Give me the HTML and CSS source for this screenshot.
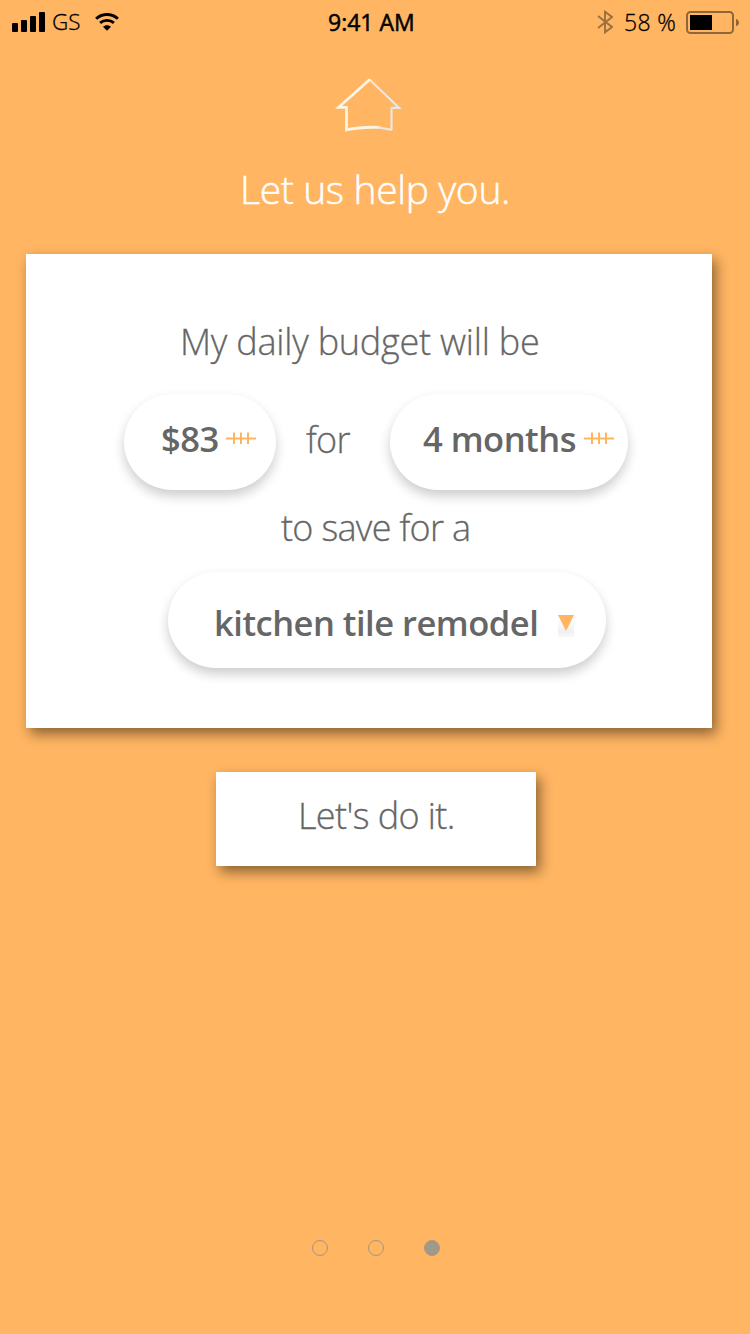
FILE: index.html
```html
<!DOCTYPE html>
<html lang="en">
<head>
<meta charset="utf-8">
<title>Daily budget</title>
<link rel="stylesheet" href="styles.css">
</head>
<body>
<main class="screen">
  <header class="status">
    <div class="status-left">
      <svg class="signal" width="34" height="20" viewBox="0 0 34 20"><rect x="0" y="11" width="6" height="9" rx="1"/><rect x="9" y="8" width="6" height="12" rx="1"/><rect x="18" y="4" width="6" height="16" rx="1"/><rect x="27" y="0" width="6" height="20" rx="1"/></svg>
      <span class="carrier">GS</span>
      <svg class="wifi" width="24" height="18" viewBox="0 0 24 18" fill="none" stroke="#000" stroke-width="2.9"><path d="M1.1 5.7C7.2 0 16.8 0 22.9 5.7"/><path d="M5.1 9.9C9 6.5 15 6.5 18.9 9.9"/><path d="M8 13.8C10 11.7 14 11.7 16 13.8L12 17.8Z" fill="#000" stroke="none"/></svg>
    </div>
    <span class="time">9:41 AM</span>
    <div class="status-right">
      <svg class="bluetooth" width="16" height="24" viewBox="0 0 16 24" fill="none" stroke="#99703e" stroke-width="1.9"><path d="M1 6L15 17L8 22.3V1.7L15 7L1 18"/></svg>
      <span class="percent">58 %</span>
      <svg class="battery" width="54" height="24" viewBox="0 0 54 24"><rect x="1" y="1" width="46" height="21" rx="3.5" fill="none" stroke="#8f6636" stroke-width="2"/><rect x="4" y="4" width="22" height="15"/><path d="M50 8C54 9 54 14 50 15.2Z" fill="#8f6636"/></svg>
    </div>
  </header>

  <svg class="house" width="68" height="56" viewBox="0 0 68 56" fill="none">
    <path d="M56.5 52.9V30.8H64L34.5 2.5" stroke="#ece6df" stroke-width="2.2"/>
    <path d="M35 2.2L3.5 30.4H11.5V52.9C22 50.4 33 49.9 45 50.4" stroke="#fff3e3" stroke-width="2.8"/>
    <path d="M43 50.5L57 52.9" stroke="#ece6df" stroke-width="2.2"/>
  </svg>
  <h1 class="title"><span>Let us help you.</span></h1>

  <section class="card">
    <p class="line line-budget">My daily budget will be</p>
    <div class="row">
      <div class="pill pill-amount"><span class="amount">$83</span>
        <svg class="ticks" width="30" height="12" viewBox="0 0 30 12" fill="none" stroke="#ffb560" stroke-width="2"><path d="M0 6.5H30M8 .5V12M15 .5V12M22 .5V12"/></svg>
      </div>
      <span class="line line-for">for</span>
      <div class="pill pill-term"><span class="term">4 months</span>
        <svg class="ticks" width="30" height="12" viewBox="0 0 30 12" fill="none" stroke="#ffb560" stroke-width="2"><path d="M0 6.5H30M8 .5V12M15 .5V12M22 .5V12"/></svg>
      </div>
    </div>
    <p class="line line-save">to save for a</p>
    <div class="pill pill-goal"><span class="goal">kitchen tile remodel</span>
      <span class="caret"><svg width="16" height="16" viewBox="0 0 16 16"><path d="M0 0H16L8 16Z" fill="#ffb560"/></svg></span>
    </div>
  </section>

  <button class="cta"><span>Let's do it.</span></button>

  <nav class="dots"><i class="dot"></i><i class="dot"></i><i class="dot dot-active"></i></nav>
</main>
</body>
</html>
```
FILE: styles.css
```css
* { box-sizing: border-box; }
body { margin: 0; }
.screen {
  width: 750px;
  height: 1334px;
  display: flex;
  flex-direction: column;
  align-items: flex-start;
  background: #ffb562;
  color: #666;
  font-family: "Open Sans", "Noto Sans", sans-serif;
  font-weight: 300;
  overflow: hidden;
  white-space: nowrap;
}
svg { display: block; flex: none; }
.status {
  width: 750px;
  height: 46px;
  display: grid;
  grid-template-columns: 328px 1fr auto;
  color: #000;
  font-size: 23px;
  line-height: 44px;
}
.status-left, .status-right { display: flex; }
.signal { margin: 12px 0 0 12px; }
.carrier, .percent { -webkit-text-stroke: .3px #000; }
.carrier { width: 42px; margin-left: 6px; font-size: 22.5px; }
.wifi { margin: 13px 0 0 1px; }
.time { font-weight: 500; font-size: 23px; -webkit-text-stroke: .5px #000; }
.bluetooth { margin: 10px 3px 0 0; }
.percent { width: 57px; margin-left: 8px; letter-spacing: .3px; }
.battery { margin: 11px 10px 0 5px; }
.house { margin: 31px 0 0 335px; }
.title {
  margin: 29px 0 0 240px;
  font-size: 39px;
  font-weight: 300;
  line-height: 54px;
  letter-spacing: -0.35px;
  color: #fff;
  -webkit-text-stroke: .5px #fff;
}
.card {
  width: 686px;
  height: 474px;
  margin: 38px 0 0 26px;
  padding-top: 64px;
  background: #fff;
  box-shadow: 4px 6px 12px rgba(0, 0, 0, .45);
}
.line, .pill { margin: 0; font-size: 36px; line-height: 48px; }
.line { letter-spacing: -0.7px; -webkit-text-stroke: .3px #666; }
.line-budget { padding-left: 154px; letter-spacing: -0.22px; }
.row { display: flex; margin: 28px 0 0 98px; }
.pill {
  display: flex;
  height: 96px;
  border-radius: 48px;
  background: #fff;
  font-size: 34.5px;
  font-weight: 600;
  letter-spacing: -0.5px;
  box-shadow: 0 6px 12px rgba(0, 0, 0, .2);
}
.pill-amount { width: 152px; padding: 21px 0 0 37px; }
.amount { width: 65px; }
.ticks { margin-top: 17px; }
.line-for { width: 114px; padding: 22px 0 0 30px; }
.pill-term { width: 238px; padding: 21px 0 0 33px; }
.term { width: 161px; }
.line-save { margin-top: 14px; padding-left: 255px; }
.pill-goal { width: 438px; margin: 20px 0 0 142px; padding: 27px 0 0 46px; }
.goal { width: 344px; }
.caret { height: 22px; margin-top: 16px; background: linear-gradient(#fff 15%, #f0f0f0 75%, #f8f8f8); }
.cta {
  width: 320px;
  height: 94px;
  margin: 44px 0 0 216px;
  padding: 20px 0 26px 82px;
  border: 0;
  background: #fff;
  color: #666;
  font: 300 36px/48px "Open Sans", "Noto Sans", sans-serif;
  letter-spacing: -0.6px;
  text-align: left;
  -webkit-text-stroke: .3px #666;
  box-shadow: 4px 6px 12px rgba(0, 0, 0, .45);
}
.dots { display: flex; gap: 40px; margin: 374px 0 0 312px; }
.dot { width: 16px; height: 16px; border: 1px solid #a69883; border-radius: 50%; }
.dot-active { background: #a29a88; }
```
